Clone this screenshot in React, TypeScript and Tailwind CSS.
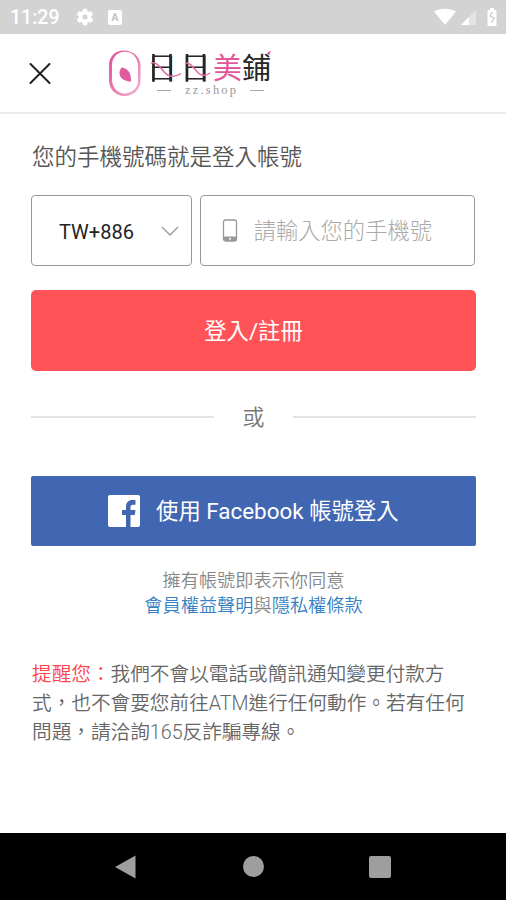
import React, { useState } from "react";

const StatusBar = () => (
  <div className="flex h-[34px] items-center justify-between bg-[#d3d3d3] pl-[10px] pr-[8px] text-white">
    <div className="flex items-center">
      <span className="w-[65px] text-[19.5px] font-medium leading-[32px] pt-[2px]">11:29</span>
      <svg className="h-[20px] w-[20px]" viewBox="0 0 24 24" fill="currentColor">
        <path d="M19.43 12.98c.04-.32.07-.64.07-.98s-.03-.66-.07-.98l2.11-1.65c.19-.15.24-.42.12-.64l-2-3.46c-.12-.22-.39-.3-.61-.22l-2.49 1c-.52-.4-1.08-.73-1.69-.98l-.38-2.65A.49.49 0 0 0 14 2h-4c-.25 0-.46.18-.49.42l-.38 2.65c-.61.25-1.17.59-1.69.98l-2.49-1c-.23-.09-.49 0-.61.22l-2 3.46c-.13.22-.07.49.12.64l2.11 1.65c-.04.32-.07.65-.07.98s.03.66.07.98l-2.11 1.65c-.19.15-.24.42-.12.64l2 3.46c.12.22.39.3.61.22l2.49-1c.52.4 1.08.73 1.69.98l.38 2.65c.03.24.24.42.49.42h4c.25 0 .46-.18.49-.42l.38-2.65c.61-.25 1.17-.59 1.69-.98l2.49 1c.23.09.49 0 .61-.22l2-3.46c.12-.22.07-.49-.12-.64l-2.11-1.65ZM12 15a3 3 0 1 1 0-6 3 3 0 0 1 0 6Z" />
      </svg>
      <span className="ml-[13px] flex h-[15px] w-[14px] items-center justify-center rounded-[2px] bg-white text-[11px] font-bold leading-none text-[#c4c4c4]">
        A
      </span>
    </div>
    {/* wifi, signal, battery */}
    <svg className="h-[20px] w-[64px]" viewBox="0 0 64 20" fill="currentColor">
      <path d="M0 4.500C6 .8 16 .8 22 4.500L11 18Z" />
      <path d="M42 3v15H27Z" opacity=".4" />
      <path d="M35 10v8h-8Z" />
      <path d="M54.500 3h1.500V1h4v2h1.500q1 0 1 1v14q0 1-1 1h-7q-1 0-1-1V4q0-1 1-1Z" />
      <path d="m58.500 5-2.500 4 4 2-2.500 5" fill="none" stroke="#c9c9c9" strokeWidth="1.300" />
    </svg>
  </div>
);

const Logo = () => (
  <svg className="h-[78px] w-[180px]" viewBox="0 -14 180 78">
    <defs>
      <linearGradient id="ring" x1="0" y1="0" x2="1" y2="1">
        <stop offset="0" stopColor="#df4f98" />
        <stop offset=".5" stopColor="#e879af" />
        <stop offset="1" stopColor="#f3b9d3" />
      </linearGradient>
    </defs>
    <path
      fill="url(#ring)"
      fillRule="evenodd"
      d="M17 2.500C26 2.500 33.500 9 33.500 17.500v15c0 9-7 15.500-16 15.500S2 41 2 32V17C2 8.500 8.500 2.500 17 2.500Zm1 1.200C10 3.700 5 9.500 5 17.500V31c0 8 5 14.500 12.500 14.500S31 40 31 32.500v-14C31 9.500 25.500 3.700 18 3.700Z"
    />
    <path d="M14.500 19.500c5 .5 10 4 9.500 14-5 0-10.500-2-11.500-7.500-.3-2.500.5-4 2-6.500Z" fill="#df5c9e" />
    <g fontFamily="'Noto Sans CJK TC', sans-serif" fill="#262626">
      <text x="39.500" y="31" fontSize="31" fontWeight="300">日</text>
      <text x="73" y="31" fontSize="31" fontWeight="300">日</text>
      <text x="106" y="31" fontSize="29" fill="#e0589b">美</text>
      <text x="135" y="31" fontSize="29">鋪</text>
    </g>
    {/* heavier side stems */}
    <path d="M46.500 6v27.500M63.500 6v27.500M80 6v27.500M97 6v27.500" stroke="#262626" strokeWidth="2.600" />
    <path
      d="M44 15c9-2 11 11 19 13 4 1 8-.5 11-2.500M78 15c8-1 10 10 17 12 3 1 6-.5 8-2"
      fill="none"
      stroke="#e56aa6"
      strokeWidth="1.500"
    />
    <path d="m159.500 7 1.500-3 3-1-1.500 3.500Z" fill="#df5c9e" />
    <path d="M50 42.500h14M143 42.500h14" stroke="#aaa" />
    <text x="78" y="46" fontSize="12.500" letterSpacing="2.200" fill="#999" fontFamily="'Liberation Serif', serif">
      zz.shop
    </text>
  </svg>
);

export default function App() {
  const [phone, setPhone] = useState("");

  return (
    <div className="flex h-[900px] w-[506px] flex-col overflow-hidden bg-white font-['Roboto','Noto_Sans_CJK_TC',sans-serif]">
      <StatusBar />

      <header className="flex h-[80px] items-center border-b-2 border-[#ebebeb] pl-[29px]">
        <svg className="mr-[56px] h-[22px] w-[22px]" viewBox="0 0 22 22" stroke="#222" strokeWidth="2">
          <path d="m1.500 2 19 19M20.500 2l-19 19" strokeLinecap="round" />
        </svg>
        <Logo />
      </header>

      <main className="flex flex-1 flex-col px-[31px] pt-[26px]">
        <h1 className="pl-px text-[22.500px] font-[350] leading-[34px] text-[#555]">您的手機號碼就是登入帳號</h1>

        <div className="mt-[21px] flex h-[71px] gap-2">
          <button className="flex w-[161px] items-center justify-between rounded-[4px] border-[1.500px] border-[#999] pl-[27px] pr-[12px] text-[20px] text-[#222]">
            <span className="pt-[2px]">TW+886</span>
            <svg className="h-[10px] w-[18px]" viewBox="0 0 18 10" fill="none" stroke="#999" strokeWidth="1.300">
              <path d="m1 1 8 8 8-8" />
            </svg>
          </button>
          <label className="flex w-[276px] items-center rounded-[4px] border border-[#999] pl-[21px]">
            <svg className="h-[23px] w-[16px] shrink-0" viewBox="0 0 16 23">
              <rect x="1.500" y="1" width="13" height="21" rx="2" fill="none" stroke="#999" strokeWidth="1.300" />
              <path d="M1.500 17.500h13V20q0 2-2 2h-9q-2 0-2-2Z" fill="#999" />
              <circle cx="8" cy="19.700" r="1" fill="#fff" />
            </svg>
            <input
              className="ml-4 w-[200px] bg-transparent pt-[2px] text-[22.300px] font-light text-[#666] outline-none placeholder:text-[#aaa]"
              placeholder="請輸入您的手機號"
              value={phone}
              onChange={(e) => setPhone(e.target.value)}
            />
          </label>
        </div>

        <button className="mt-6 h-[81px] w-[445px] rounded-[5px] bg-[#ff5357] pt-[2px] text-[22.300px] text-white">
          登入/註冊
        </button>

        <div className="mt-[29px] flex h-[34px] w-[445px] items-center text-[22px] font-[350] text-[#777]">
          <span className="h-[2px] flex-1 bg-[#e3e3e3]" />
          <span className="w-[79px] pt-px text-center">或</span>
          <span className="h-[2px] flex-1 bg-[#e3e3e3]" />
        </div>

        <button className="mt-[42px] flex h-[70px] w-[445px] items-center rounded-[2px] bg-[#4267b2] pl-[77px] text-[22.400px] text-white">
          <svg className="mr-4 h-[32px] w-[32px]" viewBox="0 0 32 32">
            <rect width="32" height="32" rx="2" fill="#fff" />
            <path
              d="M18 32V20h-4v-5h4v-3.500C18 7.500 20.500 5 24.500 5c1.200 0 2.300.1 3 .2v4.500H25c-2 0-2.500 1-2.500 2.500V15h5l-.7 5h-4.300v12Z"
              fill="#4267b2"
            />
          </svg>
          <span className="pt-[2px]">使用 Facebook 帳號登入</span>
        </button>

        <p className="mt-[22px] w-[445px] text-center text-[18.200px] font-[350] leading-[25px] text-[#888]">
          擁有帳號即表示你同意
          <br />
          <a className="text-[#357fc4]">會員權益聲明</a>與<a className="text-[#357fc4]">隱私權條款</a>
        </p>

        <p className="mt-[42px] whitespace-nowrap pl-px text-[19.650px] font-[350] leading-[29px] text-[#666]">
          <span className="text-[#ff4348]">提醒您：</span>我們不會以電話或簡訊通知變更付款方
          <br />
          式，也不會要您前往ATM進行任何動作。若有任何
          <br />
          問題，請洽詢165反詐騙專線。
        </p>
      </main>

      <nav className="flex h-[67px] items-center justify-between bg-black pl-[115px] pr-[115px]">
        <svg className="h-[24px] w-[22px]" viewBox="0 0 22 24">
          <path d="M0 12 20.500.5v23Z" fill="#9e9e9e" />
        </svg>
        <span className="h-[21px] w-[21px] rounded-full bg-[#9e9e9e]" />
        <span className="h-[22px] w-[22px] rounded-[2px] bg-[#9e9e9e]" />
      </nav>
    </div>
  );
}
